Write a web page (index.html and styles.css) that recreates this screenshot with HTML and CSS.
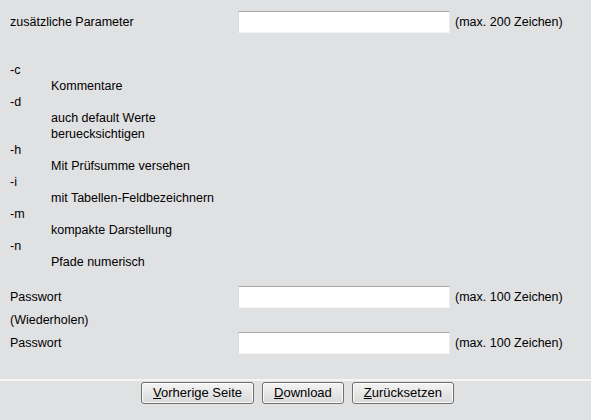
FILE: index.html
```html
<!DOCTYPE html>
<html lang="de">
<head>
<meta charset="utf-8">
<title>Parameter</title>
<link rel="stylesheet" href="styles.css">
</head>
<body>
<form class="page">
  <div class="content">
    <div class="field-row">
      <label class="field-label" for="param">zusätzliche Parameter</label>
      <input class="text-input" id="param" type="text">
      <span class="hint">(max. 200 Zeichen)</span>
    </div>

    <dl class="options">
      <dt>-c</dt><dd>Kommentare</dd>
      <dt>-d</dt><dd>auch default Werte<br>beruecksichtigen</dd>
      <dt>-h</dt><dd>Mit Prüfsumme versehen</dd>
      <dt>-i</dt><dd>mit Tabellen-Feldbezeichnern</dd>
      <dt>-m</dt><dd>kompakte Darstellung</dd>
      <dt>-n</dt><dd>Pfade numerisch</dd>
    </dl>

    <div class="password-block">
      <div class="field-row">
        <label class="field-label" for="pw1">Passwort</label>
        <input class="text-input" id="pw1" type="password">
        <span class="hint">(max. 100 Zeichen)</span>
      </div>
      <div class="note-row">(Wiederholen)</div>
      <div class="field-row">
        <label class="field-label" for="pw2">Passwort</label>
        <input class="text-input" id="pw2" type="password">
        <span class="hint">(max. 100 Zeichen)</span>
      </div>
    </div>
  </div>

  <hr class="separator">

  <div class="actions">
    <button class="btn" type="button"><u>V</u>orherige Seite</button>
    <button class="btn" type="button"><u>D</u>ownload</button>
    <button class="btn" type="reset"><u>Z</u>urücksetzen</button>
  </div>
</form>
</body>
</html>
```

FILE: styles.css
```css
html, body {
  margin: 0;
  padding: 0;
  background: #e0e1e3;
}

body {
  font-family: "Liberation Sans", Arial, sans-serif;
  font-size: 12.5px;
  color: #000;
}

.page {
  margin: 0;
  padding-top: 11px;
}

.content {
  padding-left: 10px;
}

.field-row {
  display: grid;
  grid-template-columns: 228px 212px auto;
  align-items: center;
  height: 22px;
}

.field-label {
  line-height: 16px;
}

.text-input {
  box-sizing: border-box;
  width: 212px;
  height: 22px;
  margin: 0;
  padding: 1px 3px;
  background: #fff;
  border: 1px solid;
  border-color: #a8a8a8 #ececec #f4f4f4 #dadada;
  font-family: inherit;
  font-size: 12.5px;
  outline: none;
}

.hint {
  margin-left: 5px;
  line-height: 16px;
  white-space: nowrap;
}

.options {
  margin: 29px 0 0 0;
  line-height: 16px;
}

.options dt {
  margin: 0;
}

.options dd {
  margin: 0 0 0 41px;
}

.password-block {
  margin-top: 16px;
}

.note-row {
  height: 24px;
  line-height: 24px;
}

.separator {
  margin: 25px 0 0 0;
  height: 2px;
  border: 0;
  background: #f5f5f6;
}

.actions {
  display: flex;
  justify-content: center;
  gap: 8px;
  margin-top: 1px;
  padding-left: 4px;
}

.btn {
  box-sizing: border-box;
  height: 22px;
  margin: 0;
  padding: 0 11px;
  border: 1px solid #6f6f6f;
  border-radius: 3px;
  background: linear-gradient(#f4f4f4, #e6e6e6 50%, #d9d9d9);
  box-shadow: inset 0 0 0 1px #fbfbfb;
  font-family: "Liberation Sans", Arial, sans-serif;
  font-size: 13px;
  color: #000;
  line-height: 18px;
}
```
